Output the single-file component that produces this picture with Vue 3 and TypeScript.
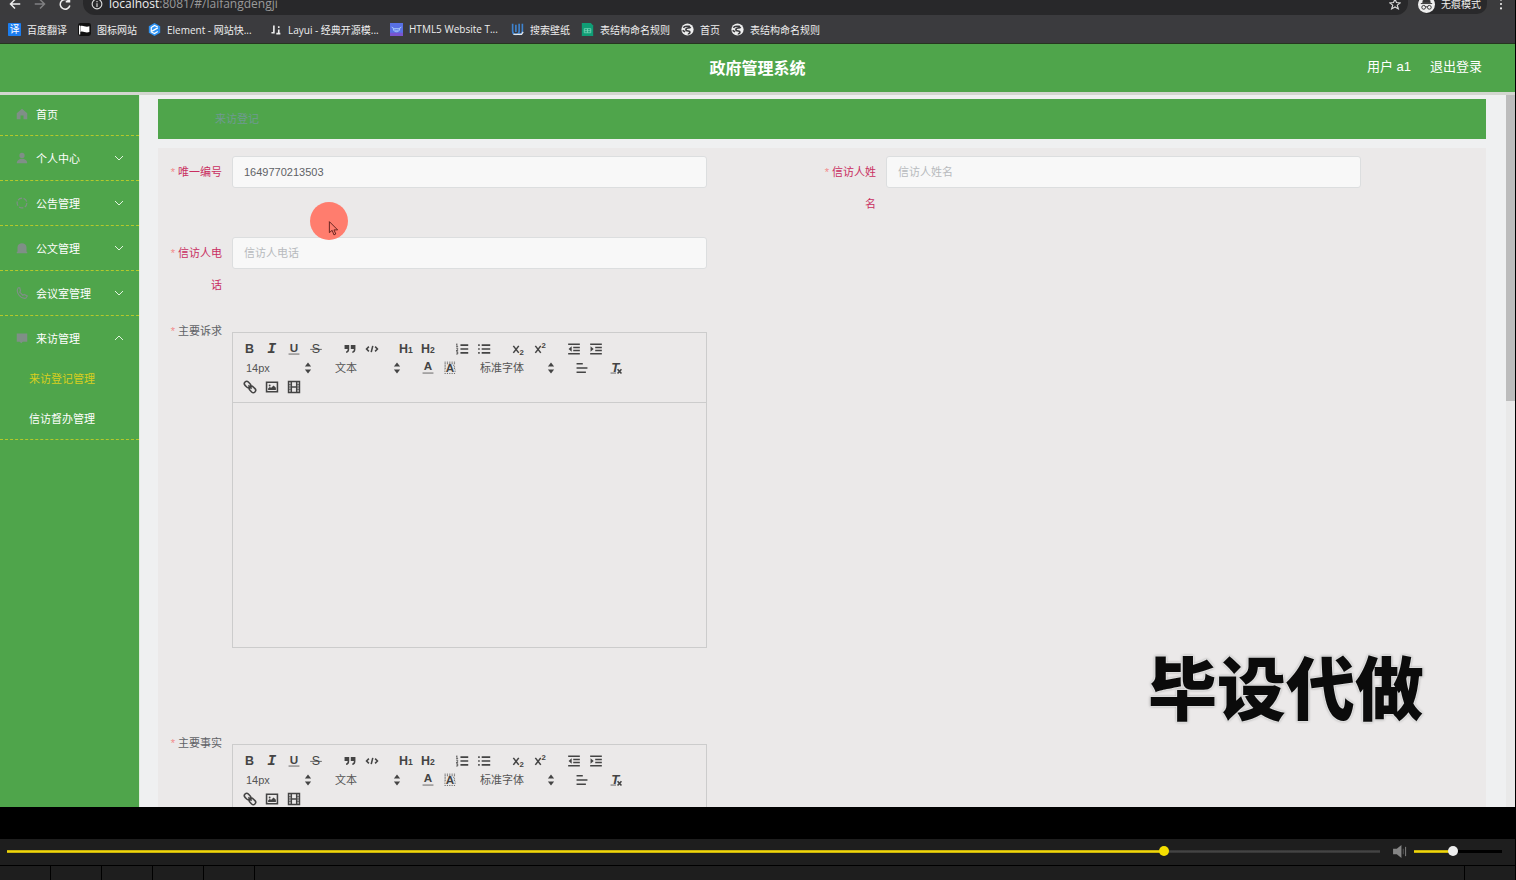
<script setup lang="ts">
import { ref } from 'vue'

interface Bookmark { label: string; icon: string; clipped?: boolean }
interface MenuItem { label: string; icon: string; arrow?: 'down' | 'up'; children?: { label: string; active: boolean }[] }
interface Tool { kind: 'button' | 'select'; name: string; icon?: string; wide?: boolean }

const globe = '<circle cx="8" cy="8" r="7.500" fill="#eee"/><path d="M3 6c2-4 5-1 8-2M12 5c-2 2-6 0-6 3s5 1 5 3-2 2-2 3M2 9l3 2" fill="none" stroke="#3a3a3d" stroke-width="2"/>'

const bookmarks: Bookmark[] = [
  { label: '百度翻译', icon: '<rect width="16" height="16" rx="1" fill="#1b7df0"/><text x="8" y="12.500" font-size="12" text-anchor="middle" fill="#fff">译</text>' },
  { label: '图标网站', icon: '<rect width="16" height="16" rx="3" fill="#111"/><path d="M2 3v11" stroke="#fff" stroke-width="1.500"/><path d="M3 4c3-2 6 2 11 0v7c-5 2-8-2-11 0z" fill="#fff"/>' },
  { label: 'Element - 网站快...', clipped: true, icon: '<path d="M8 0l7 4v8l-7 4-7-4V4z" fill="#2f93f3"/><path d="M12 5L8 3 4 5.500V11l4 2 4-2.500M5 10l7-4" fill="none" stroke="#fff" stroke-width="1.500"/>' },
  { label: 'Layui - 经典开源模...', clipped: true, icon: '<path d="M3 12h4M6 3v10M9 13h5M12 8v5M12 4v2" fill="none" stroke="#eee" stroke-width="2"/>' },
  { label: 'HTML5 Website T...', clipped: true, icon: '<rect width="16" height="16" fill="#5870e4"/><path d="M0 12h16v4H0z" fill="#7954cf"/><path d="M2 5l3 2h6l3-2M4 7c0 5 8 5 8 0M6 8l2 2 2-2" fill="none" stroke="#b9dcff"/>' },
  { label: '搜索壁纸', icon: '<path d="M2 1v9q0 4 4 4t4-4V1M6 2v9M14 1v9q0 4-4 4" fill="none" stroke="#3e83cf" stroke-width="2"/><path d="M3 14h10l2-3" fill="none" stroke="#e8e8e8" stroke-width="1.500"/>' },
  { label: '表结构命名规则', icon: '<path d="M1 0h11l3 3v13H1z" fill="#0f9d75"/><path d="M4 7h8v5H4zM4 9.500h8M8 7v5" fill="none" stroke="#7ad6b8"/>' },
  { label: '首页', icon: globe },
  { label: '表结构命名规则', icon: globe },
]

const menu: MenuItem[] = [
  { label: '首页', icon: '<path d="M8 1l7 6v8h-5v-5H6v5H1V7z"/>' },
  { label: '个人中心', arrow: 'down', icon: '<circle cx="8" cy="4.500" r="3.500"/><path d="M1 15c0-8 14-8 14 0z"/>' },
  { label: '公告管理', arrow: 'down', icon: '<circle cx="8" cy="8" r="6.500" fill="none" stroke="currentColor" stroke-width="1.500" stroke-dasharray="6 2"/>' },
  { label: '公文管理', arrow: 'down', icon: '<path d="M2 13V7c0-7 12-7 12 0v6h1v2H1v-2z"/>' },
  { label: '会议室管理', arrow: 'down', icon: '<path d="M3 1c-4 6 3 15 10 14l2-3-4-2-2 1-4-4 1-2-1-4z" fill="none" stroke="currentColor" stroke-width="1.500"/>' },
  {
    label: '来访管理', arrow: 'up', icon: '<path d="M1 2h14v11H9l-2 2-2-2H1z"/>',
    children: [{ label: '来访登记管理', active: true }, { label: '信访督办管理', active: false }],
  },
]

const button = (name: string, icon: string): Tool => ({ kind: 'button', name, icon })
const lines = (d: string) => `<path class="line" d="${d}"/>`

const toolRows: Tool[][][] = [
  [
    [
      button('加粗', '<text x="2.500" y="14.500" font-size="16" font-weight="bold">B</text>'),
      button('斜体', '<text x="3" y="14.500" font-size="19" font-weight="bold" font-style="italic" font-family="Liberation Mono">I</text>'),
      button('下划线', '<text x="3.500" y="12.500" font-size="15" font-weight="bold">U</text><path class="line thin" d="M2 15.500h14"/>'),
      button('删除线', '<text x="3.500" y="14.500" font-size="16">S</text><path class="line thin" d="M1.500 9.500h15"/>'),
    ],
    [
      button('引用', '<path d="M2 4h6v5c0 3-1 5-4 5v-2c1 0 2-1 2-3H2zM10 4h6v5c0 3-1 5-4 5v-2c1 0 2-1 2-3h-4z"/>'),
      button('代码', lines('M5 6L2 9l3 3M13 6l3 3-3 3M10 5L8 13')),
    ],
    [
      button('标题一', '<text x="0" y="14.500" font-size="16" font-weight="bold">H<tspan font-size="11">1</tspan></text>'),
      button('标题二', '<text x="0" y="14.500" font-size="16" font-weight="bold">H<tspan font-size="11">2</tspan></text>'),
    ],
    [
      button('有序列表', lines('M7 4h10M7 9h10M7 14h10') + '<path class="line thin" d="M2.500 2v4M1.500 3h1M1.500 6h2.500M1.500 8h2v1.500l-2 1.500h2.500M1.500 12.500h2v3h-2M2 14h1.500"/>'),
      button('无序列表', lines('M6 4h11M6 9h11M6 14h11M1.500 4h2M1.500 9h2M1.500 14h2')),
    ],
    [
      button('下标', lines('M3 5l7 9M10 5l-7 9') + '<text x="11" y="17" font-size="10" font-weight="bold">2</text>'),
      button('上标', lines('M3 5l7 9M10 5l-7 9') + '<text x="11" y="8" font-size="10" font-weight="bold">2</text>'),
    ],
    [
      button('减少缩进', lines('M1.500 3h15M8 7h8.500M8 11h8.500M1.500 15h15') + '<path d="M6 5.500v7L2 9z"/>'),
      button('增加缩进', lines('M1.500 3h15M8 7h8.500M8 11h8.500M1.500 15h15') + '<path d="M2 5.500v7L6 9z"/>'),
    ],
  ],
  [
    [{ kind: 'select', name: '14px' }],
    [{ kind: 'select', name: '文本' }],
    [
      button('字体颜色', '<text x="3.500" y="12" font-size="15" font-weight="bold">A</text><path class="line thin" d="M2 15.500h14"/>'),
      button('背景颜色', '<path class="line thin" stroke-dasharray="1.500 1.500" d="M2 1.500h14M2 3.500h14M2 5.500h3M13 5.500h3M2 7.500h2M14 7.500h2M2 9.500h2M14 9.500h2M2 11.500h1M15 11.500h1M2 13.500h1M15 13.500h1M2 16h14"/><text x="3.500" y="14" font-size="15" font-weight="bold">A</text>'),
    ],
    [{ kind: 'select', name: '标准字体', wide: true }],
    [button('对齐', lines('M2 3.500h8M2 9h14M2 14.500h12'))],
    [button('清除格式', '<text x="3" y="13.500" font-size="17" font-weight="bold" font-style="italic">T</text><path class="line thin" d="M2 15.500h7"/>' + lines('M11 10.500l5 5.500M16 10.500l-5 5.500'))],
  ],
  [
    [
      button('链接', '<g transform="rotate(45 9 9)"><rect class="line" x="0" y="6" width="9" height="6" rx="3"/><rect class="line" x="9" y="6" width="9" height="6" rx="3"/><path class="line" d="M6 9h6"/></g>'),
      button('图片', '<path class="line" d="M2 3h14v12H2z"/><path d="M4 13v-2l2-2 2 1 3-3 3 3v3z"/><circle cx="6" cy="7" r="1.200"/>'),
      button('视频', '<path class="line" d="M2 2h14v14H2zM5.500 2v14M12.500 2v14M6 9h6"/><path class="line thin" d="M2 6h3M2 9h3M2 12h3M13 6h3M13 9h3M13 12h3"/>'),
    ],
  ],
]

const editors = [{ id: 'appeal', label: '主要诉求' }, { id: 'facts', label: '主要事实' }]

const code = ref('1649770213503')
const visitor = ref('')
const phone = ref('')
const progress = ref(84.5)
const volume = ref(43)
</script>

<template>
  <div class="player">
    <div class="screen">
      <div class="address-row">
        <button class="chrome-btn" aria-label="后退"><svg viewBox="0 0 16 16"><path d="M15 8H2M8 2L2 8l6 6" /></svg></button>
        <button class="chrome-btn dim" aria-label="前进"><svg viewBox="0 0 16 16"><path d="M1 8h13M8 2l6 6-6 6" /></svg></button>
        <button class="chrome-btn" aria-label="刷新"><svg viewBox="0 0 16 16"><path d="M13 4a6.500 6.500 0 1 0 1.500 6M14 0v5H9" /></svg></button>
        <div class="address">
          <svg class="info" viewBox="0 0 16 16"><circle cx="8" cy="8" r="6.500" /><path d="M8 7v5M8 4v1.500" /></svg>
          <span class="url">localhost<span class="path">:8081/#/laifangdengji</span></span>
          <svg class="star" viewBox="0 0 16 16"><path d="M8 1.500l2 4.500 5 .5-4 3 1.500 5L8 12l-4.500 2.500L5 9.500l-4-3L6 6z" /></svg>
        </div>
        <div class="incognito">
          <svg viewBox="0 0 18 18"><circle cx="9" cy="9" r="9" fill="#eee" /><path d="M5 7l1-4h6l1 4zM3 8h12" fill="#333" stroke="#333" /><circle cx="6" cy="12" r="2" fill="none" stroke="#333" /><circle cx="12" cy="12" r="2" fill="none" stroke="#333" /><path d="M8 11.500h2" stroke="#333" /></svg>
          <span>无痕模式</span>
        </div>
        <button class="more" aria-label="更多"><svg viewBox="0 0 4 16"><circle cx="2" cy="3" r="1.200" /><circle cx="2" cy="8" r="1.200" /><circle cx="2" cy="13" r="1.200" /></svg></button>
      </div>
      <nav class="bookmarks">
        <a v-for="(mark, i) in bookmarks" :key="i" href="#" class="bookmark">
          <svg viewBox="0 0 16 16" v-html="mark.icon"></svg>
          <span :class="{ clipped: mark.clipped }">{{ mark.label }}</span>
        </a>
      </nav>

      <header class="site-header">
        <h1>政府管理系统</h1>
        <div class="account"><span>用户 a1</span><a href="#">退出登录</a></div>
      </header>

      <div class="workspace">
        <nav class="sidebar">
          <div v-for="item in menu" :key="item.label" class="group">
            <a href="#" class="entry">
              <svg class="glyph" viewBox="0 0 16 16" v-html="item.icon"></svg>
              <span>{{ item.label }}</span>
              <svg v-if="item.arrow" class="arrow" :class="item.arrow" viewBox="0 0 10 10"><path d="M1 3l4 4 4-4" /></svg>
            </a>
            <a v-for="child in item.children" :key="child.label" href="#" class="child" :class="{ active: child.active }">{{ child.label }}</a>
          </div>
        </nav>

        <main class="content">
          <div class="crumb">来访登记</div>
          <form class="panel" @submit.prevent>
            <div class="field">
              <label for="code"><i>*</i>唯一编号</label>
              <input id="code" v-model="code" type="text">
            </div>
            <div class="field">
              <label for="visitor"><i>*</i>信访人姓名</label>
              <input id="visitor" v-model="visitor" type="text" placeholder="信访人姓名">
            </div>
            <div class="field">
              <label for="phone"><i>*</i>信访人电话</label>
              <input id="phone" v-model="phone" type="text" placeholder="信访人电话">
            </div>
            <div v-for="editor in editors" :key="editor.id" class="field rich">
              <label :for="editor.id"><i>*</i>{{ editor.label }}</label>
              <div class="editor">
                <div class="toolbar">
                  <div v-for="(row, r) in toolRows" :key="r" class="tool-row">
                    <div v-for="(group, g) in row" :key="g" class="tool-group">
                      <template v-for="tool in group" :key="tool.name">
                        <button v-if="tool.kind === 'button'" type="button" class="tool" :aria-label="tool.name">
                          <svg viewBox="0 0 18 18" v-html="tool.icon"></svg>
                        </button>
                        <div v-else class="picker" :class="{ wide: tool.wide }">
                          <select :aria-label="tool.name"><option>{{ tool.name }}</option></select>
                          <svg viewBox="0 0 18 18"><path d="M5 7l4-5 4 5zM5 11l4 5 4-5z" /></svg>
                        </div>
                      </template>
                    </div>
                  </div>
                </div>
                <textarea :id="editor.id"></textarea>
              </div>
            </div>
          </form>
        </main>
        <div class="scrollbar"><div class="thumb"></div></div>
      </div>

      <div class="pointer">
        <svg viewBox="0 0 12 18"><path d="M1.500 1.500v12l3-2.500 2 5 2-1-2-4.500h4z" /></svg>
      </div>
      <div class="watermark">毕设代做</div>
    </div>

    <div class="controls">
      <input v-model="progress" class="seek" type="range" min="0" max="100" step="0.1" aria-label="播放进度" :style="{ '--fill': progress + '%' }">
      <svg class="speaker" viewBox="0 0 16 14"><path d="M0 4h4l5-4v14l-5-4H0z" fill="#858585" /><path d="M11 4v6" stroke="#555" /><path d="M13.500 2v10" stroke="#858585" /></svg>
      <input v-model="volume" class="volume" type="range" min="0" max="100" aria-label="音量" :style="{ '--fill': volume + '%' }">
    </div>
    <div class="strip"><span v-for="n in 5" :key="n"></span><span class="last"></span></div>
  </div>
</template>

<style>
body { margin: 0; background: #000; }
</style>

<style scoped>
* { box-sizing: border-box; }
.player {
  height: 100vh;
  display: flex;
  flex-direction: column;
  padding-right: 1px;
  background: #000;
  overflow: hidden;
  font-family: "Liberation Sans", "Noto Sans CJK SC", sans-serif;
  font-size: 11px;
}
.screen {
  position: relative;
  flex: 1;
  min-height: 0;
  margin-bottom: 32px;
  display: flex;
  flex-direction: column;
  overflow: hidden;
}
button { padding: 0; border: 0; background: none; }
a { color: inherit; text-decoration: none; }

.address-row {
  flex: none;
  height: 15px;
  display: flex;
  background: #3b3b3d;
  font-family: "Open Sans", "Noto Sans CJK SC", sans-serif;
  color: #eee;
}
.chrome-btn { width: 25px; height: 8px; display: flex; align-items: center; justify-content: center; }
.chrome-btn:first-child { margin-left: 2px; }
.chrome-btn svg { flex: none; width: 12px; height: 12px; fill: none; stroke: #eee; stroke-width: 2; }
.chrome-btn.dim svg { stroke: #808082; }
.address {
  flex: 1;
  display: flex;
  margin-left: 6px;
  padding: 0 7px 0 8px;
  background: #28282a;
  border-radius: 0 0 12px 12px;
  line-height: 8px;
  font-size: 12px;
}
.info, .star { flex: none; width: 12px; height: 12px; margin-top: -2px; fill: none; stroke: #ddd; stroke-width: 1.5; }
.star { margin-left: auto; }
.url { margin-left: 6px; }
.path { color: #9a9a9a; }
.incognito {
  display: flex;
  gap: 6px;
  height: 14px;
  margin-left: 10px;
  padding-right: 6px;
  border-radius: 0 0 10px 10px;
  background: #29292b;
  line-height: 8px;
  font-size: 10px;
}
.incognito svg { width: 17px; height: 17px; margin-top: -4px; }
.more { width: 28px; height: 8px; display: flex; align-items: center; justify-content: center; }
.more svg { flex: none; width: 4px; height: 14px; fill: #eee; }

.bookmarks {
  flex: none;
  height: 29px;
  display: flex;
  align-items: center;
  gap: 11px;
  padding-left: 8px;
  background: #3b3b3e;
  border-bottom: 1px solid #26361f;
  color: #eee;
  font-family: "Open Sans", "Noto Sans CJK SC", sans-serif;
  font-size: 10px;
  white-space: nowrap;
}
.bookmark { display: flex; align-items: center; gap: 6px; }
.bookmark svg { width: 13px; height: 13px; }
.clipped { width: 91px; }

.site-header {
  flex: none;
  height: 51px;
  display: grid;
  grid-template-columns: 1fr auto 1fr;
  align-items: center;
  padding: 0 33px;
  background: #4fa54b;
  border-bottom: 3px solid #d3d6d0;
  color: #fff;
}
h1 { grid-column: 2; margin: 0; padding-top: 2px; font-size: 16px; line-height: 24px; }
.account { display: flex; justify-content: flex-end; gap: 19px; font-size: 13px; line-height: 20px; padding-bottom: 2px; }

.workspace { flex: 1; min-height: 0; display: flex; background: #eff0f1; }
.sidebar {
  flex: none;
  width: 140px;
  background: #4fa54b;
  border-right: 1px solid #dfeedd;
  color: #fff;
}
.group { border-bottom: 1px dashed #b4c92b; }
.entry { display: flex; align-items: center; height: 44px; padding: 0 15px 0 16px; }
.group:first-child .entry { height: 40px; padding-bottom: 2px; }
.group:last-child .entry { height: 43px; }
.glyph { width: 12px; height: 12px; margin-right: 8px; fill: currentColor; color: #7f8f87; }
.arrow { width: 10px; height: 10px; margin-left: auto; fill: none; stroke: #e2f3df; }
.arrow.up { transform: rotate(180deg); }
.child { display: block; height: 40px; padding-left: 29px; line-height: 40px; }
.child.active { color: #d8cf1e; }

.content { flex: 1; min-width: 0; padding: 4px 20px 0 18px; overflow: hidden; }
.crumb { height: 40px; padding-left: 57px; background: #4fa54b; color: #6f9a92; line-height: 40px; }
.panel {
  display: grid;
  grid-template-columns: 1fr 1fr;
  margin-top: 9px;
  padding: 8px 10px;
  background: #ebe9e9;
}
.field { display: flex; align-items: flex-start; min-height: 81px; color: #c92f61; }
.field label {
  flex: none;
  width: 64px;
  padding-right: 10px;
  line-height: 32px;
  text-align: right;
}
.field i { margin-right: 3px; color: #f28b8b; font-style: normal; }
.field > input {
  flex: 1;
  min-width: 0;
  height: 32px;
  margin-right: 115px;
  padding: 0 11px;
  border: 1px solid #dcdedf;
  border-radius: 3px;
  background: #f8f8f8;
  color: #606266;
  font: inherit;
}
.field > input::placeholder { color: #b7babd; }
.rich { grid-column: 1; height: 412px; color: #606266; }
.rich label { line-height: 26px; }
.editor {
  flex: 1;
  min-width: 0;
  height: 316px;
  display: flex;
  flex-direction: column;
  margin: 14px 115px 0 0;
  border: 1px solid #ccc;
}
.toolbar { flex: none; padding: 6px; border-bottom: 1px solid #ccc; }
.tool-row { height: 19px; display: flex; gap: 12px; }
.tool-group { display: flex; }
.tool { width: 22px; height: 19px; display: flex; align-items: center; justify-content: center; }
.tool svg { width: 14px; height: 14px; fill: #444; overflow: visible; }
.tool :deep(.line) { fill: none; stroke: #444; stroke-width: 2; }
.tool :deep(.thin) { stroke-width: 1; }
.picker { position: relative; width: 77px; }
.picker.wide { width: 86px; }
.picker select {
  width: 100%;
  height: 19px;
  padding: 0 0 0 7px;
  appearance: none;
  border: 0;
  background: none;
  color: #555;
  font: inherit;
}
.picker svg { position: absolute; top: 3px; right: 1px; width: 14px; height: 14px; fill: #444; pointer-events: none; }
textarea { flex: 1; border: 0; padding: 12px; background: none; resize: none; font: inherit; }

.scrollbar { flex: none; width: 9px; background: #e9e9e9; }
.thumb { height: 43%; background: #bcbcbc; }

.pointer {
  position: absolute;
  left: 310px;
  top: 202px;
  width: 38px;
  height: 38px;
  display: flex;
  padding: 18px 0 0 18px;
  border-radius: 50%;
  background: #ff7d6e;
}
.pointer svg { width: 11px; height: 17px; fill: #ff7d6e; stroke: #5c1f1a; }
.watermark {
  position: absolute;
  right: 91px;
  bottom: 65px;
  color: #0b0b0b;
  font-size: 69px;
  font-weight: 900;
  line-height: 100px;
  text-shadow: 1px 1px 0 #ddd, -1px -1px 0 #ddd, 1px -1px 0 #ddd, -1px 1px 0 #ddd, 0 0 3px #555;
}

.controls { flex: none; height: 26px; display: flex; align-items: center; padding: 0 13px 1px 7px; background: #1e1e1e; }
.controls input { appearance: none; height: 10px; margin: 0; background: none; }
.seek { flex: 1; min-width: 0; }
.seek::-webkit-slider-runnable-track {
  height: 3px;
  background: linear-gradient(#0005, #0000 34% 66%, #0005), linear-gradient(90deg, #f0d60c var(--fill), #444 var(--fill));
}
.seek::-webkit-slider-thumb { appearance: none; width: 10px; height: 10px; margin-top: -4px; border-radius: 50%; background: #f4de00; }
.speaker { width: 15px; height: 13px; margin: 0 6px 0 13px; }
.volume { width: 88px; }
.volume::-webkit-slider-runnable-track {
  height: 3px;
  background: linear-gradient(#0005, #0000 34% 66%, #0005), linear-gradient(90deg, #f0d60c var(--fill), #000 var(--fill));
}
.volume::-webkit-slider-thumb { appearance: none; width: 10px; height: 10px; margin-top: -4px; border-radius: 50%; background: #eee; }
.strip { flex: none; height: 15px; display: flex; border-top: 1px solid #000; background: #1e1e1e; }
.strip span { width: 51px; border-right: 1px solid #000; }
.strip .last { margin-left: auto; border-right: 0; border-left: 1px solid #000; }
</style>
